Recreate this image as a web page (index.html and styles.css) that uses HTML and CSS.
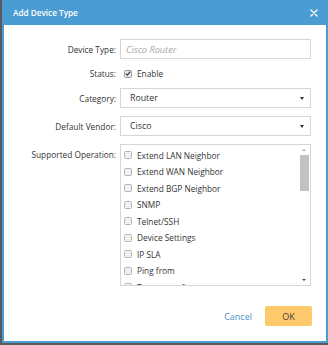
FILE: index.html
```html
<!DOCTYPE html>
<html>
<head>
<meta charset="utf-8">
<link rel="stylesheet" href="styles.css">
</head>
<body>
<div class="dialog">
  <div class="header">
    <span class="title">Add Device Type</span>
    <svg class="close" width="8" height="8" viewBox="0 0 8 8"><path d="M1 1L7 7M7 1L1 7" stroke="#fff" stroke-width="1.4" stroke-linecap="round"/></svg>
  </div>
  <div class="form">
    <label class="lbl">Device Type:</label>
    <div class="input"><span class="placeholder">Cisco Router</span></div>

    <label class="lbl">Status:</label>
    <div class="status"><span class="chk checked"><svg width="7" height="7" viewBox="0 0 7 7"><path d="M1 3.6L2.8 5.4L6 1.4" fill="none" stroke="#333" stroke-width="1.3"/></svg></span><span>Enable</span></div>

    <label class="lbl">Category:</label>
    <div class="select"><span class="val">Router</span><span class="caret"></span></div>

    <label class="lbl">Default Vendor:</label>
    <div class="select"><span class="val">Cisco</span><span class="caret"></span></div>

    <label class="lbl top">Supported Operation:</label>
    <div class="list">
      <div class="items">
        <div class="item"><span class="chk"></span>Extend LAN Neighbor</div>
        <div class="item"><span class="chk"></span>Extend WAN Neighbor</div>
        <div class="item"><span class="chk"></span>Extend BGP Neighbor</div>
        <div class="item"><span class="chk"></span>SNMP</div>
        <div class="item"><span class="chk"></span>Telnet/SSH</div>
        <div class="item"><span class="chk"></span>Device Settings</div>
        <div class="item"><span class="chk"></span>IP SLA</div>
        <div class="item"><span class="chk"></span>Ping from</div>
        <div class="item"><span class="chk"></span>Traceroute from</div>
      </div>
      <div class="scrollbar">
        <span class="arrow up"></span>
        <div class="track"><div class="thumb"></div></div>
        <span class="arrow down"></span>
      </div>
    </div>
  </div>
  <div class="footer">
    <span class="cancel">Cancel</span>
    <span class="ok">OK</span>
  </div>
</div>
</body>
</html>
```

FILE: styles.css
```css
* { box-sizing: border-box; }
html, body { margin: 0; padding: 0; }
body {
  width: 328px;
  height: 345px;
  background: #5a5a5a;
  font-family: "Open Sans", "Noto Sans", sans-serif;
  font-size: 8.3px;
  color: #333;
  overflow: hidden;
}
.dialog {
  margin-left: 2px;
  width: 326px;
  height: 343px;
  background: #fff;
  border: 2px solid #4b9cd3;
  border-top: none;
  display: flex;
  flex-direction: column;
}
.header {
  height: 25px;
  background: #4b9cd3;
  display: flex;
  align-items: center;
  justify-content: space-between;
  margin: 0 -2px;
  padding: 0 10px 0 11px;
}
.title {
  color: #fff;
  font-weight: 600;
  font-size: 8.2px;
}
.form {
  display: grid;
  grid-template-columns: 112px 191px;
  column-gap: 4px;
  row-gap: 8px;
  padding-top: 14px;
  align-items: center;
}
.lbl {
  text-align: right;
  color: #333;
}
.lbl.top { align-self: start; padding-top: 5px; }
.input {
  height: 20px;
  border: 1px solid #d6d6d6;
  display: flex;
  align-items: center;
  padding-left: 5px;
}
.placeholder {
  color: #a8a8a8;
  font-style: italic;
  font-size: 9.2px;
}
.status {
  display: flex;
  align-items: center;
  height: 13px;
  padding-left: 4px;
}
.chk {
  width: 8px;
  height: 8px;
  border: 1px solid #b5b5b5;
  border-radius: 1.5px;
  background: #f1f1f1;
  display: inline-flex;
  align-items: center;
  justify-content: center;
  margin-right: 5px;
  flex: none;
}
.chk.checked { background: #e8e8e8; border-color: #999; }
.chk svg { display: block; }
.select {
  height: 20px;
  border: 1px solid #d6d6d6;
  display: flex;
  align-items: center;
  justify-content: space-between;
  padding: 0 6px 0 9px;
}
.select .val { font-size: 8.8px; color: #333; }
.caret {
  width: 0;
  height: 0;
  border-left: 2.5px solid transparent;
  border-right: 2.5px solid transparent;
  border-top: 3px solid #333;
  margin-top: 1px;
}
.list {
  height: 142px;
  border: 1px solid #d6d6d6;
  display: flex;
  overflow: hidden;
}
.items {
  flex: 1;
  padding-top: 2px;
  padding-left: 3px;
}
.item {
  height: 16.5px;
  display: flex;
  align-items: center;
  white-space: nowrap;
}
.scrollbar {
  width: 10px;
  margin-right: 1px;
  display: flex;
  flex-direction: column;
  align-items: center;
  padding: 4px 0 4px;
}
.arrow {
  width: 0;
  height: 0;
  border-left: 2px solid transparent;
  border-right: 2px solid transparent;
  flex: none;
}
.arrow.up { border-bottom: 2.5px solid #aaa; }
.arrow.down { border-top: 2.5px solid #444; }
.track {
  flex: 1;
  width: 10px;
  padding-top: 4px;
}
.thumb {
  width: 9px;
  margin: 0 auto;
  height: 36px;
  background: #c2c2c2;
}
.footer {
  flex: 1;
  display: flex;
  justify-content: flex-end;
  align-items: center;
  padding-right: 14px;
  padding-top: 5px;
}
.cancel {
  color: #4a8fc4;
  font-size: 9px;
  margin-right: 13px;
}
.ok {
  width: 47px;
  height: 20px;
  background: #fdc96b;
  border-radius: 2px;
  display: flex;
  align-items: center;
  justify-content: center;
  color: #444;
  font-size: 9px;
}
```
